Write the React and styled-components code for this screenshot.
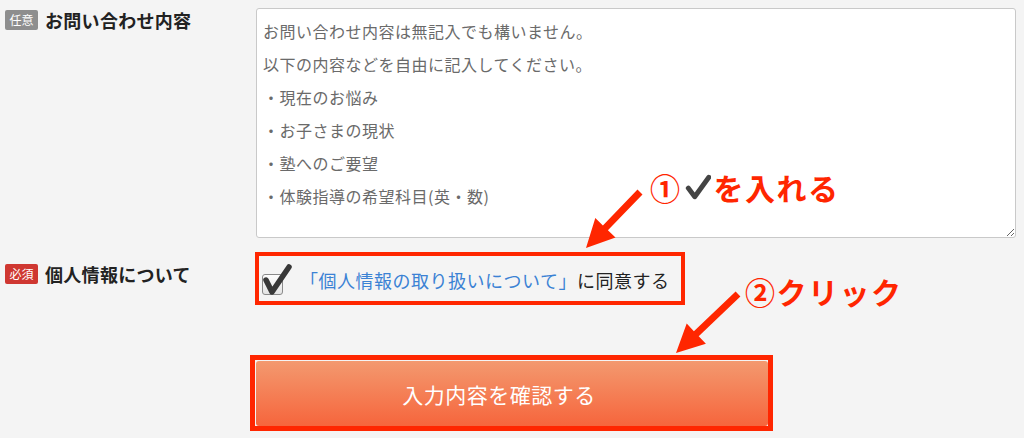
import React from 'react';
import styled, { createGlobalStyle } from 'styled-components';

const GlobalStyle = createGlobalStyle`
    html, body {
        margin: 0;
        padding: 0;
        background-color: #f4f4f4;
        font-family: "Noto Sans CJK JP", "Noto Sans", sans-serif;
    }
`

const Page = styled.div`
    position: relative;
    width: 1024px;
    height: 438px;
    padding-top: 8px;
    box-sizing: border-box;
    overflow: hidden;
`

const FormRow = styled.div`
    display: grid;
    grid-template-columns: ${props => props.labelWidth}px auto;
    margin-top: ${props => props.top || 0}px;
    align-items: start;
`

const Label = styled.div`
    display: flex;
    align-items: center;
    gap: 7px;
    padding-left: 5px;
    margin-top: ${props => props.top}px;
    font-size: 18px;
    font-weight: 700;
    letter-spacing: 0.3px;
    color: #222;
    line-height: 20px;
`

const Badge = styled.span`
    display: inline-flex;
    align-items: center;
    justify-content: center;
    width: 33px;
    height: 20px;
    border-radius: 2px;
    font-size: 12px;
    font-weight: 400;
    letter-spacing: 0;
    color: #fff;
    background-color: ${props => props.required ? "#cf3731" : "#8e8e8e"};
`

const TextArea = styled.textarea`
    width: 760px;
    height: 230px;
    box-sizing: border-box;
    margin: 0;
    padding: 6px 6px;
    border: 1px solid #c9c9c9;
    border-radius: 3px;
    background-color: #fff;
    font-family: inherit;
    font-size: 16px;
    letter-spacing: 0.5px;
    line-height: 33px;
    color: #555;

    &::placeholder {
        color: #6a6a6a;
    }
`

const Highlight = styled.div`
    display: inline-flex;
    align-items: center;
    width: 430px;
    height: 53px;
    box-sizing: border-box;
    border: 4px solid #ff2600;
    padding-left: 3px;
`

const CheckWrap = styled.span`
    position: relative;
    display: inline-block;
    width: 21px;
    height: 21px;
    margin-top: 12px;
    margin-right: 17px;
    box-sizing: border-box;
    border: 1px solid #8a8a8a;
    border-radius: 3px;
    background: linear-gradient(#fdfdfd, #e4e4e4);
`

const CheckMark = styled.svg`
    position: absolute;
    left: -2px;
    top: -12px;
    overflow: visible;
`

const AgreeText = styled.span`
    font-size: 18px;
    letter-spacing: 0.5px;
    color: #222;
    margin-top: 3px;
`

const Link = styled.a`
    color: #3b82d4;
    text-decoration: none;
`

const ButtonFrame = styled.div`
    margin: 50px 0 0 250px;
    width: 523px;
    height: 76px;
    box-sizing: border-box;
    border: 5px solid #ff2600;
    padding: 1px 0 0 1px;
`

const SubmitButton = styled.button`
    display: block;
    width: 512px;
    height: 65px;
    padding: 0 26px 0 0;
    border: none;
    border-radius: 3px;
    background: linear-gradient(#f3996f, #f6653c);
    color: #fff;
    font-family: inherit;
    font-size: 21px;
    letter-spacing: 0.5px;
`

const Overlay = styled.svg`
    position: absolute;
    left: 0;
    top: 0;
    pointer-events: none;
`

const Note = styled.div`
    position: absolute;
    left: ${props => props.x}px;
    top: ${props => props.y}px;
    display: flex;
    align-items: center;
    gap: 3px;
    font-size: 30px;
    font-weight: 700;
    letter-spacing: 1.5px;
    line-height: 30px;
    color: #ff2600;
    white-space: nowrap;
`

const placeholder = [
    "お問い合わせ内容は無記入でも構いません。",
    "以下の内容などを自由に記入してください。",
    "・現在のお悩み",
    "・お子さまの現状",
    "・塾へのご要望",
    "・体験指導の希望科目(英・数)",
].join("\n");

const App = () => {
    return (
        <Page>
            <GlobalStyle />
            <FormRow labelWidth={256}>
                <Label top={2}>
                    <Badge>任意</Badge>お問い合わせ内容
                </Label>
                <TextArea placeholder={placeholder} />
            </FormRow>

            <FormRow labelWidth={255} top={14}>
                <Label top={12}>
                    <Badge required>必須</Badge>個人情報について
                </Label>
                <Highlight>
                    <CheckWrap>
                        <CheckMark width="30" height="32" viewBox="0 0 30 32">
                            <path d="M5 17 L11 29 L28 4" fill="none" stroke="#383838"
                                strokeWidth="5.5" strokeLinecap="round" strokeLinejoin="round" />
                        </CheckMark>
                    </CheckWrap>
                    <AgreeText>
                        <Link href="#">「個人情報の取り扱いについて」</Link>に同意する
                    </AgreeText>
                </Highlight>
            </FormRow>

            <ButtonFrame>
                <SubmitButton type="button">入力内容を確認する</SubmitButton>
            </ButtonFrame>

            {/* annotation arrows drawn over the form */}
            <Overlay width="1024" height="438" viewBox="0 0 1024 438">
                <polygon fill="#ff2600" points="642.5,194.4 607.9,230.2 615.5,237.5 586,248 595.3,218.1 602.9,225.4 637.5,189.6" />
                <polygon fill="#ff2600" points="740.4,296.5 698.7,336.2 705.9,343.8 676,353 686.7,323.6 693.9,331.2 735.6,291.5" />
            </Overlay>

            <Note x={650} y={172}>
                <span>①</span>
                <svg width="26" height="26" viewBox="0 0 24 24">
                    <path d="M3 13 L9 21 L22 3" fill="none" stroke="#444" strokeWidth="4.5"
                        strokeLinecap="round" strokeLinejoin="round" />
                </svg>
                <span>を入れる</span>
            </Note>
            <Note x={745} y={276}>
                <span>②クリック</span>
            </Note>
        </Page>
    );
}

export default App;
